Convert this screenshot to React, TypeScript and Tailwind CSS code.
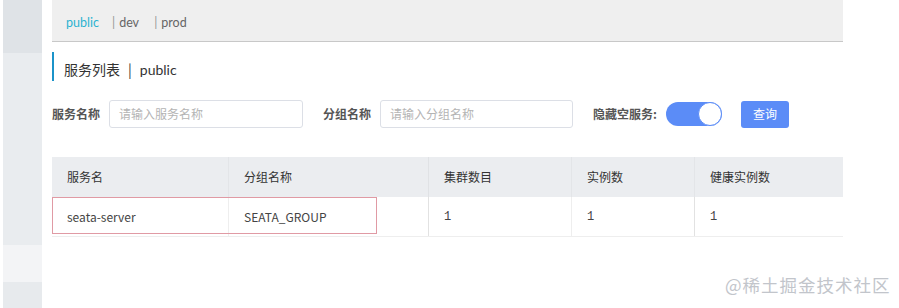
import React from "react";

const font = { fontFamily: '"Noto Sans CJK SC", "Noto Sans", sans-serif' };
const latin = { fontFamily: 'Lato, "Noto Sans CJK SC", sans-serif' };

export default function App() {
  return (
    <div className="relative w-[899px] h-[308px] bg-white flex overflow-hidden text-[#333]" style={font}>
      {/* sidebar */}
      <div className="ml-[3px] w-[39px] flex flex-col shrink-0">
        <div className="h-[53px] bg-[#dfe3e7]" />
        <div className="h-[192px] bg-[#e9ecef]" />
        <div className="h-[37px] bg-[#f3f4f6]" />
        <div className="flex-1 bg-[#e7eaed]" />
      </div>
      {/* main */}
      <div className="ml-[10px] w-[791px] flex flex-col">
        <div className="h-[42px] bg-[#efefef] border-b border-[#c8c8c8] flex items-center pl-[14px] text-[12.5px] pt-[5px]" style={latin}>
          <span className="text-[#2bb3d1] w-[46px]">public</span>
          <span className="text-[#999]">|</span>
          <span className="ml-[4px] text-[#666] w-[35px]">dev</span>
          <span className="text-[#999]">|</span>
          <span className="ml-[4px] text-[#666]">prod</span>
        </div>
        <div className="mt-[10px] h-[29px] border-l-2 border-[#1b93c9] flex items-end pl-[10px] pb-[1px] text-[14px] text-[#333]">
          <span>服务列表</span>
          <span className="ml-[8px]">|</span>
          <span className="ml-[8px]" style={latin}>public</span>
        </div>
        <div className="mt-[19px] h-[28px] flex items-center text-[12px]">
          <span className="font-bold text-[#555] w-[57px]">服务名称</span>
          <div className="w-[194px] h-[28px] border border-[#dcdfe6] rounded-[3px] flex items-center pl-[9px] text-[#b4b4b4]">请输入服务名称</div>
          <span className="ml-[20px] font-bold text-[#555] w-[57px]">分组名称</span>
          <div className="w-[193px] h-[28px] border border-[#dcdfe6] rounded-[3px] flex items-center pl-[9px] text-[#b4b4b4]">请输入分组名称</div>
          <span className="ml-[20px] font-bold text-[#555] w-[73px]">隐藏空服务:</span>
          <div className="w-[56px] h-[24px] rounded-full bg-[#5b8cf7] flex items-center justify-end">
            <div className="w-[24px] h-[24px] rounded-full bg-white border border-[#5b8cf7]" />
          </div>
          <div className="ml-[19px] w-[48px] h-[27px] rounded-[3px] bg-[#5b8cf7] text-white flex items-center justify-center text-[12px]">查询</div>
        </div>
        <div className="mt-[29px] w-[791px] text-[12px] relative">
          <div className="h-[40px] bg-[#ebedf0] flex items-center text-[#333]">
            <div className="w-[176px] pl-[15px]">服务名</div>
            <div className="w-[200px] h-full flex items-center pl-[15px] border-l border-[#e3e5e8]">分组名称</div>
            <div className="w-[143px] h-full flex items-center pl-[15px] border-l border-[#e0e2e5]">集群数目</div>
            <div className="w-[123px] h-full flex items-center pl-[15px] border-l border-[#e3e5e8]">实例数</div>
            <div className="flex-1 h-full flex items-center pl-[15px] border-l border-[#e3e5e8]">健康实例数</div>
          </div>
          <div className="h-[40px] flex items-center border-b border-[#eeeeee] text-[#444]">
            <div className="w-[176px] pl-[15px]">seata-server</div>
            <div className="w-[200px] h-full flex items-center pl-[15px] border-l border-[#eeeeee]">SEATA_GROUP</div>
            <div className="w-[143px] h-full flex items-center pl-[15px] border-l border-[#e2e2e2] font-mono">1</div>
            <div className="w-[123px] h-full flex items-center pl-[15px] border-l border-[#eeeeee] font-mono">1</div>
            <div className="flex-1 h-full flex items-center pl-[15px] border-l border-[#e2e2e2] font-mono">1</div>
          </div>
          <div className="absolute left-0 top-[40px] w-[325px] h-[37px] border border-[#e09aa4] pointer-events-none" />
        </div>
      </div>
      <div className="absolute left-[725px] top-[272px] text-[17.5px] text-[#c2c5cb] tracking-[1px]">@稀土掘金技术社区</div>
    </div>
  );
}
